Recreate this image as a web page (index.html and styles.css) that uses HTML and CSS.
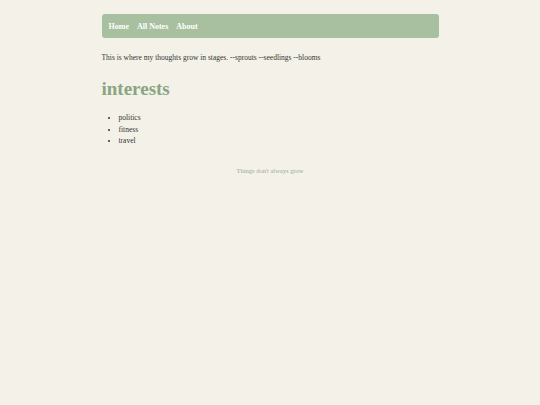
FILE: index.html
```html
<!DOCTYPE html>
<html>
<head>
<meta charset="utf-8">
<link rel="stylesheet" href="styles.css">
</head>
<body>
<div class="wrap">
  <nav class="nav">
    <a href="#">Home</a>
    <a href="#">All Notes</a>
    <a href="#">About</a>
  </nav>
  <p class="intro">This is where my thoughts grow in stages. --sprouts --seedlings --blooms</p>
  <h1 class="title">interests</h1>
  <ul class="list">
    <li>politics</li>
    <li>fitness</li>
    <li>travel</li>
  </ul>
  <footer class="foot">Things don't always grow</footer>
</div>
</body>
</html>
```
FILE: styles.css
```css
html, body {
  margin: 0;
  padding: 0;
  background: #f4f1e8;
}
body {
  font-family: "Liberation Serif", Georgia, serif;
  color: #333;
}
.wrap {
  width: 337px;
  margin: 0 auto;
  padding-top: 14px;
}
.nav {
  background: #a8c0a0;
  border-radius: 3px;
  height: 24px;
  display: flex;
  align-items: center;
  gap: 8px;
  padding: 0 7px;
}
.nav a {
  color: #fff;
  text-decoration: none;
  font-weight: bold;
  font-size: 8px;
}
.intro {
  font-size: 7.5px;
  margin: 15px 0 0 0;
}
.title {
  font-size: 19px;
  color: #8aa583;
  margin: 16px 0 0 0;
  line-height: 22px;
}
.list {
  margin: 12px 0 0 0;
  padding-left: 17px;
  font-size: 7.5px;
  line-height: 11.5px;
}
.foot {
  text-align: center;
  font-size: 6.5px;
  color: #9aab95;
  margin-top: 20px;
}
```
